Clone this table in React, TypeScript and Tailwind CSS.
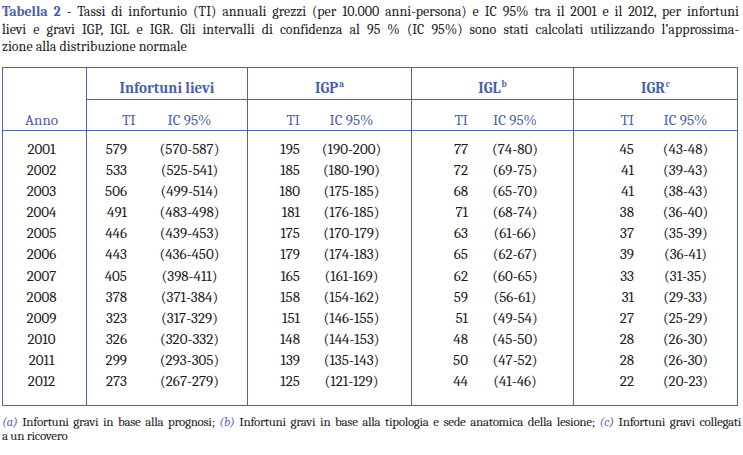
const rows: [string, string, string, string, string, string, string, string, string][] = [
  ["2001", "579", "(570-587)", "195", "(190-200)", "77", "(74-80)", "45", "(43-48)"],
  ["2002", "533", "(525-541)", "185", "(180-190)", "72", "(69-75)", "41", "(39-43)"],
  ["2003", "506", "(499-514)", "180", "(175-185)", "68", "(65-70)", "41", "(38-43)"],
  ["2004", "491", "(483-498)", "181", "(176-185)", "71", "(68-74)", "38", "(36-40)"],
  ["2005", "446", "(439-453)", "175", "(170-179)", "63", "(61-66)", "37", "(35-39)"],
  ["2006", "443", "(436-450)", "179", "(174-183)", "65", "(62-67)", "39", "(36-41)"],
  ["2007", "405", "(398-411)", "165", "(161-169)", "62", "(60-65)", "33", "(31-35)"],
  ["2008", "378", "(371-384)", "158", "(154-162)", "59", "(56-61)", "31", "(29-33)"],
  ["2009", "323", "(317-329)", "151", "(146-155)", "51", "(49-54)", "27", "(25-29)"],
  ["2010", "326", "(320-332)", "148", "(144-153)", "48", "(45-50)", "28", "(26-30)"],
  ["2011", "299", "(293-305)", "139", "(135-143)", "50", "(47-52)", "28", "(26-30)"],
  ["2012", "273", "(267-279)", "125", "(121-129)", "44", "(41-46)", "22", "(20-23)"],
];

// one class per column: alignment + the vertical rule after each group
const colClass = [
  "text-center pr-[6px] border-r border-[#4a63b0]",
  "text-right",
  "text-center pl-[5px] border-r border-[#4a63b0]",
  "text-right",
  "text-center pr-[8px] border-r border-[#4a63b0]",
  "text-right",
  "text-center pr-[11px] border-r border-[#4a63b0]",
  "text-right",
  "text-center",
];

const groups = [
  { label: "Infortuni lievi", sup: "" },
  { label: "IGP", sup: "a" },
  { label: "IGL", sup: "b" },
  { label: "IGR", sup: "c" },
];

export default function App() {
  return (
    <div className="w-[743px] h-[455px] bg-white overflow-hidden font-serif [font-family:Liberation_Serif,serif] text-[#1c1c1c]">
      {/* Caption */}
      <div className="pt-[3px] px-[2px] w-[741px] text-[14px] leading-[17.5px]">
        <div className="text-justify [text-align-last:justify]">
          <span className="font-bold text-[#4b5fa8]">Tabella 2</span> - Tassi di infortunio (TI) annuali grezzi (per 10.000 anni-persona) e IC 95% tra il 2001 e il 2012, per infortuni
        </div>
        <div className="text-justify [text-align-last:justify]">
          lievi e gravi IGP, IGL e IGR. Gli intervalli di confidenza al 95 % (IC 95%) sono stati calcolati utilizzando l’approssima-
        </div>
        <div>zione alla distribuzione normale</div>
      </div>

      {/* Table */}
      <div className="mt-[11.5px] ml-[2px] w-[736px] grid grid-cols-[84px_40px_121px_52px_112px_56px_106px_60px_103px] border border-[#4a63b0] text-[15px]">
        <div className="row-span-2 flex items-end justify-center pr-[6px] pb-[2px] border-r border-b border-[#4a63b0] text-[#4b5fa8] leading-[16px]">
          Anno
        </div>
        {groups.map((g, i) => (
          <div
            key={g.label}
            className={`col-span-2 h-[32px] flex items-end justify-center pb-[3px] border-b border-[#4a63b0] font-bold text-[#4b5fa8] leading-[16px] ${
              i < 3 ? "border-r" : ""
            }`}
          >
            <span>
              {g.label}
              {g.sup && <sup className="text-[9px] ml-[1px] -top-[6px]">{g.sup}</sup>}
            </span>
          </div>
        ))}

        {/* sub headers */}
        <div className="h-[31px] flex items-end pb-[2px] pl-[35px] border-b border-[#4a63b0] text-[#4b5fa8] leading-[16px]">TI</div>
        {colClass.slice(2).map((c, i) => (
          <div
            key={i}
            className={`h-[31px] pb-[2px] flex items-end border-b border-[#4a63b0] text-[#4b5fa8] leading-[16px] ${c} ${
              c.startsWith("text-right") ? "justify-end" : "justify-center"
            }`}
          >
            {i % 2 === 0 ? "IC 95%" : "TI"}
          </div>
        ))}

        {/* data */}
        {rows.map((r, ri) =>
          r.map((v, ci) => (
            <div
              key={`${ri}-${ci}`}
              className={`leading-[21.1px] ${colClass[ci]} ${ri === 0 ? "pt-[8px]" : ""} ${
                ri === rows.length - 1 ? "pb-[13px]" : ""
              }`}
            >
              {v}
            </div>
          ))
        )}
      </div>

      {/* Notes */}
      <div className="mt-[9px] ml-[2px] w-[739px] text-[13px] leading-[14px] tracking-[-0.3px]">
        <div className="text-justify [text-align-last:justify]">
          <span className="italic text-[#5a6fb8]">(a)</span> Infortuni gravi in base alla prognosi;{" "}
          <span className="italic text-[#5a6fb8]">(b)</span> Infortuni gravi in base alla tipologia e sede anatomica della lesione;{" "}
          <span className="italic text-[#5a6fb8]">(c)</span> Infortuni gravi collegati
        </div>
        <div>a un ricovero</div>
      </div>
    </div>
  );
}
